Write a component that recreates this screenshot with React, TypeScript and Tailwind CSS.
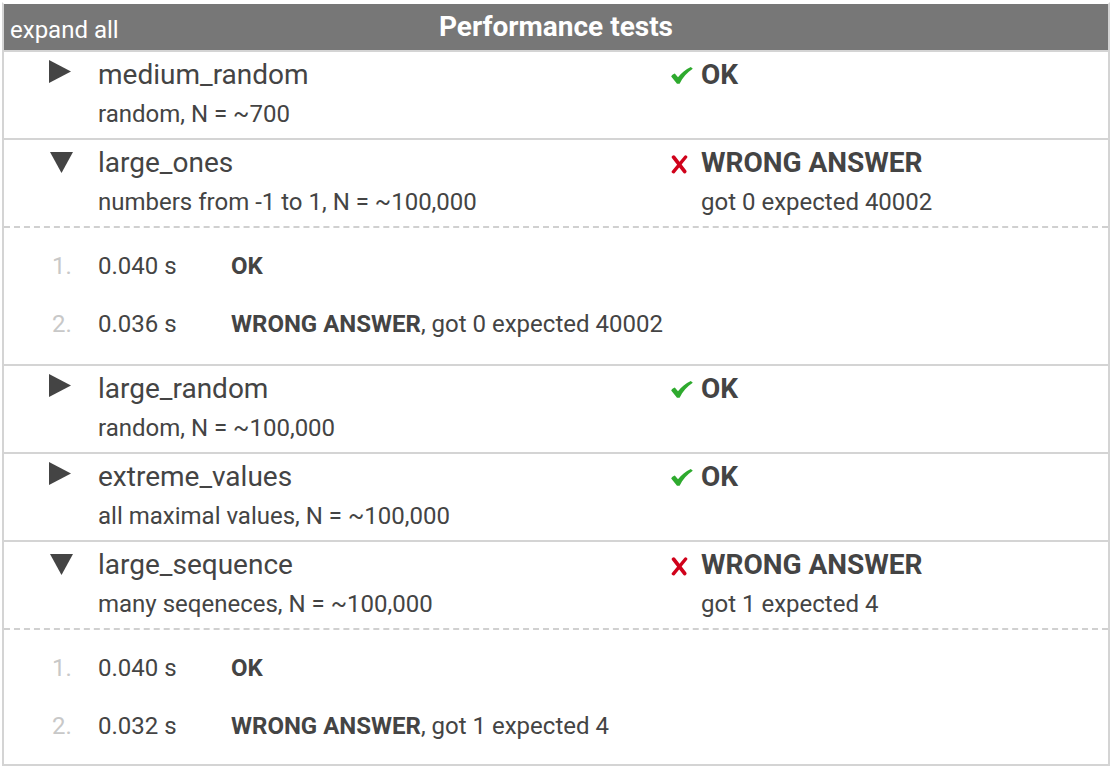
import React from "react";

type Sub = { n: number; time: string; status: string; detail?: string };
type Test = {
  name: string;
  desc: string;
  ok: boolean;
  msg?: string;
  open?: boolean;
  subs?: Sub[];
};

const tests: Test[] = [
  { name: "medium_random", desc: "random, N = ~700", ok: true },
  {
    name: "large_ones",
    desc: "numbers from -1 to 1, N = ~100,000",
    ok: false,
    msg: "got 0 expected 40002",
    open: true,
    subs: [
      { n: 1, time: "0.040 s", status: "OK" },
      { n: 2, time: "0.036 s", status: "WRONG ANSWER", detail: ", got 0 expected 40002" },
    ],
  },
  { name: "large_random", desc: "random, N = ~100,000", ok: true },
  { name: "extreme_values", desc: "all maximal values, N = ~100,000", ok: true },
  {
    name: "large_sequence",
    desc: "many seqeneces, N = ~100,000",
    ok: false,
    msg: "got 1 expected 4",
    open: true,
    subs: [
      { n: 1, time: "0.040 s", status: "OK" },
      { n: 2, time: "0.032 s", status: "WRONG ANSWER", detail: ", got 1 expected 4" },
    ],
  },
];

function RightTri() {
  return (
    <svg width="22" height="23" viewBox="0 0 22 23" className="mt-[8px]">
      <polygon points="0,0 22,11.5 0,23" fill="#444" />
    </svg>
  );
}

function DownTri() {
  return (
    <svg width="23" height="21" viewBox="0 0 23 21" className="mt-[12px] ml-[1px]">
      <polygon points="0,0 23,0 11.5,21" fill="#444" />
    </svg>
  );
}

function Check() {
  return (
    <svg width="22" height="17" viewBox="0 0 22 17" className="mt-[15px] ml-[1px]">
      <path
        d="M0.2 9.4 C1.2 8 2.4 7 3.8 6.6 L7 10.2 C10.2 6.2 14.6 2.4 19.8 0.1 L21.8 1.8 C16.2 5.6 11.6 10.6 8.6 16.8 L6 16.8 Z"
        fill="#2eaa2e"
      />
    </svg>
  );
}

function Cross() {
  return (
    <svg width="17" height="19" viewBox="0 0 17 19" className="mt-[15px] ml-[1px]">
      <path d="M2.6 2.2 L13.6 16.4" stroke="#d0021b" strokeWidth="3.8" strokeLinecap="round" />
      <path d="M14.6 2 L2.4 16.8" stroke="#d0021b" strokeWidth="3.4" strokeLinecap="round" />
    </svg>
  );
}

function Row({ t, last }: { t: Test; last: boolean }) {
  return (
    <div>
      <div
        className={
          "grid h-[88px] grid-cols-[94px_572px_1fr] " +
          (t.open ? "border-b-2 border-dashed border-[#d0d0d0]" : "border-b-2 border-[#d4d4d4]")
        }
      >
        <div className="pl-[45px]">{t.open ? <DownTri /> : <RightTri />}</div>
        <div className="flex flex-col pt-[6px]">
          <div className="text-[28px] leading-[34px]">{t.name}</div>
          <div className="mt-[7px] text-[24px] leading-[30px]">{t.desc}</div>
        </div>
        <div className="flex">
          <div className="w-[31px] shrink-0">{t.ok ? <Check /> : <Cross />}</div>
          <div className="flex flex-col pt-[6px]">
            <div className="text-[28px] font-bold leading-[34px]">{t.ok ? "OK" : "WRONG ANSWER"}</div>
            {t.msg && <div className="mt-[7px] text-[24px] leading-[30px]">{t.msg}</div>}
          </div>
        </div>
      </div>
      {t.open && t.subs && (
        <div className={"pt-[9px] " + (last ? "pb-[9px]" : "pb-[11px] border-b-2 border-[#d4d4d4]")}>
          {t.subs.map((s) => (
            <div key={s.n} className="grid h-[58px] grid-cols-[94px_133px_1fr] items-center text-[24px] leading-[30px]">
              <div className="pl-[48px] text-[#c8c8c8]">{s.n}.</div>
              <div>{s.time}</div>
              <div>
                <span className="font-bold">{s.status}</span>
                {s.detail}
              </div>
            </div>
          ))}
        </div>
      )}
    </div>
  );
}

export default function App() {
  return (
    <div className="h-[770px] w-[1112px] bg-white p-[2px] font-['Roboto',sans-serif] text-[#444]">
      <div className="border-2 border-[#d4d4d4] border-t-white">
        <div className="grid h-[48px] grid-cols-[1fr_auto_1fr] items-center border-b-2 border-[#d4d4d4] bg-[#777]">
          <div className="pl-[6px] pt-[6px] text-[24px] leading-[30px] text-white">expand all</div>
          <div className="pb-[1px] text-[28px] font-bold leading-[30px] text-white">Performance tests</div>
          <div />
        </div>
        {tests.map((t, i) => (
          <Row key={t.name} t={t} last={i === tests.length - 1} />
        ))}
      </div>
    </div>
  );
}
